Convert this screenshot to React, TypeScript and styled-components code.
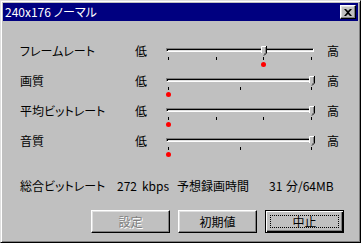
import React from "react";
import styled, { createGlobalStyle } from "styled-components";

const Global = createGlobalStyle`
  html, body { margin: 0; padding: 0; background: #c0c0c0; }
  body {
    font-family: "Noto Sans CJK JP", "Noto Sans", sans-serif;
    font-size: 12px;
    line-height: 14px;
    color: #000;
    font-feature-settings: "palt";
  }
`;

const Window = styled.div`
  box-sizing: border-box;
  width: 361px;
  height: 243px;
  background: #c0c0c0;
  border: 1px solid;
  border-color: #dfdfdf #000 #000 #dfdfdf;
  box-shadow: inset 1px 1px #fff, inset -1px -1px #808080;
  padding: 2px;
  display: flex;
  flex-direction: column;
`;

const TitleBar = styled.div`
  height: 18px;
  background: #000080;
  color: #fff;
  display: flex;
  align-items: center;
  justify-content: space-between;
  padding: 0 2px 0 2px;
`;

const TitleText = styled.span`
  font-size: 12px;
  line-height: 14px;
`;

const CloseButton = styled.div`
  box-sizing: border-box;
  width: 16px;
  height: 14px;
  background: #c0c0c0;
  border: 1px solid;
  border-color: #fff #000 #000 #fff;
  box-shadow: inset -1px -1px #808080, inset 1px 1px #dfdfdf;
  display: flex;
  align-items: center;
  justify-content: center;
`;

const Content = styled.div`
  flex: 1;
  display: flex;
  flex-direction: column;
  padding: 23px 0 0 17px;
`;

const SliderGrid = styled.div`
  display: grid;
  grid-template-columns: 115px 31px 148px auto;
  grid-auto-rows: 30px;
  align-items: start;
`;

const Label = styled.span`
  white-space: nowrap;
`;

const HighLabel = styled.span`
  padding-left: 13px;
`;

const SliderBox = styled.div`
  position: relative;
  height: 30px;
`;

const Track = styled.div`
  box-sizing: border-box;
  margin-top: 4px;
  height: 4px;
  border: 1px solid;
  border-color: #808080 #fff #fff #808080;
  box-shadow: inset 1px 1px #000, inset -1px -1px #dfdfdf;
`;

const Tick = styled.div`
  position: absolute;
  top: 13px;
  width: 1px;
  height: 3px;
  background: #000;
`;

const Dot = styled.div`
  position: absolute;
  top: 18px;
  width: 5px;
  height: 5px;
  border-radius: 50%;
  background: #ff0000;
`;

const Thumb = styled.svg`
  position: absolute;
  top: 2px;
`;

const Summary = styled.div`
  margin-top: 15px;
  display: flex;
  white-space: nowrap;
`;

const Cell = styled.span<{ $w?: number }>`
  width: ${(p) => (p.$w ? `${p.$w}px` : "auto")};
  flex: none;
`;

const ButtonRow = styled.div`
  margin-top: 17px;
  display: flex;
  justify-content: flex-end;
  gap: 8px;
  padding-right: 14px;
`;

const Button = styled.div<{ $disabled?: boolean; $default?: boolean }>`
  position: relative;
  box-sizing: border-box;
  width: 79px;
  height: 23px;
  display: flex;
  align-items: center;
  justify-content: center;
  border: 1px solid;
  border-color: ${(p) => (p.$default ? "#000" : "#fff #000 #000 #fff")};
  box-shadow: ${(p) =>
    p.$default
      ? "inset 1px 1px #fff, inset -1px -1px #000, inset -2px -2px #808080"
      : "inset -1px -1px #808080, inset 1px 1px #dfdfdf"};
  color: ${(p) => (p.$disabled ? "#808080" : "#000")};
  text-shadow: ${(p) => (p.$disabled ? "1px 1px #fff" : "none")};
`;

const FocusRing = styled.span`
  position: absolute;
  inset: 4px;
  border: 1px dotted #000;
`;

const TRACK_START = 2;
const TRACK_SPAN = 143;

type SliderProps = { ticks: number; value: number; mark: number };

function Slider({ ticks, value, mark }: SliderProps) {
  const pos = (f: number) => Math.round(TRACK_START + f * TRACK_SPAN);
  const tickList = Array.from({ length: ticks }, (_, i) => i / (ticks - 1));
  return (
    <SliderBox>
      <Track />
      {tickList.map((f, i) => (
        <Tick key={i} style={{ left: pos(f) }} />
      ))}
      <Dot style={{ left: pos(mark) - 2 }} />
      <Thumb width="6" height="10" viewBox="0 0 6 10" style={{ left: pos(value) - 2 }}>
        <polygon points="0,0 6,0 6,7 3,10 0,7" fill="#c0c0c0" />
        <path d="M0.5,7 V0.5 H5" stroke="#fff" fill="none" strokeWidth="1" />
        <path d="M5.5,0 V7 L3,9.5" stroke="#000" fill="none" strokeWidth="1" />
        <path d="M4.5,1 V6.6 L3,8.2" stroke="#808080" fill="none" strokeWidth="1" />
      </Thumb>
    </SliderBox>
  );
}

const rows = [
  { label: "フレームレート", ticks: 4, value: 2 / 3, mark: 2 / 3 },
  { label: "画質", ticks: 3, value: 1, mark: 0 },
  { label: "平均ビットレート", ticks: 4, value: 1, mark: 0 },
  { label: "音質", ticks: 3, value: 1, mark: 0 },
];

export default function App() {
  return (
    <>
      <Global />
      <Window>
        <TitleBar>
          <TitleText>240x176 ノーマル</TitleText>
          <CloseButton>
            <svg width="8" height="7" viewBox="0 0 8 7">
              <path d="M0,0 H2 L4,2 L6,0 H8 L5,3.5 L8,7 H6 L4,5 L2,7 H0 L3,3.5 Z" fill="#000" />
            </svg>
          </CloseButton>
        </TitleBar>
        <Content>
          <SliderGrid>
            {rows.map((r) => (
              <React.Fragment key={r.label}>
                <Label>{r.label}</Label>
                <Label>低</Label>
                <Slider ticks={r.ticks} value={r.value} mark={r.mark} />
                <HighLabel>高</HighLabel>
              </React.Fragment>
            ))}
          </SliderGrid>
          <Summary>
            <Cell $w={97}>総合ビットレート</Cell>
            <Cell $w={25}>272</Cell>
            <Cell $w={35}>kbps</Cell>
            <Cell $w={92}>予想録画時間</Cell>
            <Cell $w={17}>31</Cell>
            <Cell>分/64MB</Cell>
          </Summary>
          <ButtonRow>
            <Button $disabled>設定</Button>
            <Button>初期値</Button>
            <Button $default>
              <FocusRing />
              中止
            </Button>
          </ButtonRow>
        </Content>
      </Window>
    </>
  );
}
